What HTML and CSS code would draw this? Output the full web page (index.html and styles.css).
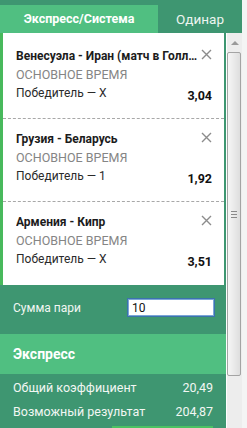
FILE: index.html
```html
<!DOCTYPE html>
<html lang="ru">
<head>
	<meta charset="UTF-8">
	<title>Купон</title>
	<link rel="stylesheet" href="styles.css">
</head>
<body>
	<div class="widget">
		<div class="tabs">
			<div class="tab on">Экспресс/Система</div>
			<div class="tab">Одинар</div>
		</div>
		<div class="frame">
			<div class="main">
				<div class="bets">
					<div class="bet">
						<div class="bet-head">
							<span class="bet-title">Венесуэла - Иран (матч в Голландии)</span>
							<svg class="close" width="11" height="11" viewBox="0 0 11 11"><path d="M1 1L10 10M10 1L1 10"/></svg>
						</div>
						<div class="bet-market">ОСНОВНОЕ ВРЕМЯ</div>
						<div class="bet-row">
							<span>Победитель — Х</span>
							<b class="odds">3,04</b>
						</div>
					</div>
					<div class="bet">
						<div class="bet-head">
							<span class="bet-title">Грузия - Беларусь</span>
							<svg class="close" width="11" height="11" viewBox="0 0 11 11"><path d="M1 1L10 10M10 1L1 10"/></svg>
						</div>
						<div class="bet-market">ОСНОВНОЕ ВРЕМЯ</div>
						<div class="bet-row">
							<span>Победитель — 1</span>
							<b class="odds">1,92</b>
						</div>
					</div>
					<div class="bet">
						<div class="bet-head">
							<span class="bet-title">Армения - Кипр</span>
							<svg class="close" width="11" height="11" viewBox="0 0 11 11"><path d="M1 1L10 10M10 1L1 10"/></svg>
						</div>
						<div class="bet-market">ОСНОВНОЕ ВРЕМЯ</div>
						<div class="bet-row">
							<span>Победитель — Х</span>
							<b class="odds">3,51</b>
						</div>
					</div>
				</div>
				<div class="stake">
					<label for="sum">Сумма пари</label>
					<input id="sum" type="text" value="10">
				</div>
				<div class="section-title">Экспресс</div>
				<div class="totals">
					<div class="total-row"><span>Общий коэффициент</span><span>20,49</span></div>
					<div class="total-row"><span>Возможный результат</span><span>204,87</span></div>
					<div class="submit"></div>
				</div>
			</div>
			<div class="scrollbar">
				<div class="arrow-up"></div>
				<div class="thumb"><span></span><span></span><span></span></div>
			</div>
		</div>
	</div>
</body>
</html>
```

FILE: styles.css
```css
*{margin:0;padding:0;box-sizing:border-box;}
body{background:#f4f4f4;font-family:Roboto,"Liberation Sans",sans-serif;font-size:12px;overflow:hidden;}
.widget{width:242px;background:#3e9671;padding-top:5px;}
.tabs{display:flex;height:28px;}
.tab{line-height:28px;text-align:center;color:#eef5f0;font-size:13.5px;}
.tab:first-child{width:158px;}
.tab:last-child{flex:1;}
.tab.on{background:#50bf81;color:#fff;font-weight:bold;font-size:12.5px;}
.frame{display:flex;}
.main{width:226px;}
.bets{background:#fff;border-left:3px solid #48b95c;margin-right:2px;padding-top:3px;}
.bet{padding:11px 12px 13px 13px;border-bottom:1px dashed #a8a8a8;}
.bet:last-child{border-bottom:none;padding-bottom:14px;}
.bet-head{display:flex;align-items:center;line-height:18px;}
.bet-title{flex:1;min-width:0;font-weight:bold;color:#1c1c1c;white-space:nowrap;overflow:hidden;text-overflow:ellipsis;}
.close{flex:none;margin-left:2px;margin-top:-4px;stroke:#8c8c8c;stroke-width:1.4;}
.bet-market{line-height:19px;color:#858585;font-size:12.5px;}
.bet-row{display:flex;justify-content:space-between;line-height:18px;color:#2a2a2a;}
.odds{padding-top:3px;color:#111;font-size:12.5px;}
.stake{display:flex;align-items:center;justify-content:space-between;padding:13px 11px 17px 13px;color:#f2f7f3;}
.stake input{width:88px;height:19px;border:1px solid #3c72ad;box-shadow:inset 0 0 0 1px #7aa6d6;padding:0 4px;font:12px Roboto,"Liberation Sans",sans-serif;color:#111;outline:none;}
.section-title{background:#50bf81;height:40px;line-height:40px;padding-left:13px;color:#fff;font-weight:bold;font-size:14px;}
.totals{padding:2px 13px 0 13px;color:#f2f7f3;font-size:12.5px;}
.total-row{display:flex;justify-content:space-between;line-height:24px;}
.submit{height:20px;margin:2px 0 0 99px;background:#4cc263;}
.scrollbar{width:16px;border-left:1px solid #fff;background:#ededed;}
.arrow-up{height:19px;display:flex;align-items:center;justify-content:center;}
.arrow-up::before{content:"";border:4px solid transparent;border-top:none;border-bottom:4px solid #9a9a9a;}
.thumb{height:324px;width:14px;border:1px solid #a4a4a4;border-radius:2px;background:linear-gradient(to right,#f6f6f6,#dedede);display:flex;flex-direction:column;justify-content:center;align-items:center;gap:2px;}
.thumb span{width:6px;height:1px;background:#8a8a8a;}
```
